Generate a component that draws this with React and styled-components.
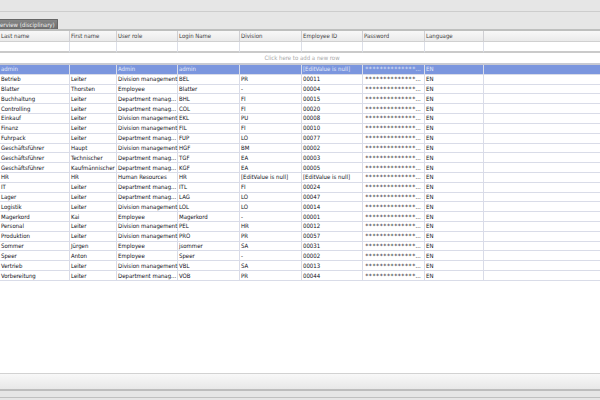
import React, { useState } from 'react';
import styled, { createGlobalStyle } from 'styled-components';

const GlobalStyle = createGlobalStyle`
  * {
    box-sizing: border-box;
  }
  body {
    margin: 0;
    background-color: #e6e6e6;
    font-family: 'DejaVu Sans Condensed', 'DejaVu Sans', sans-serif;
    font-size: 6px;
    line-height: 8px;
    color: #101018;
  }
`;

const Page = styled.div`
  display: flex;
  flex-direction: column;
  min-height: 100vh;
`;

const TopBar = styled.header`
  height: 12px;
  border-bottom: 1px solid #cdcdcd;
`;

const TabBar = styled.nav`
  display: flex;
  padding-top: 7px;
`;

const Tab = styled.button`
  height: 10px;
  padding: 1px 2px 0 0;
  border: 1px solid #666666;
  border-left: none;
  border-bottom: none;
  border-top-right-radius: 1px;
  background: linear-gradient(#868686, #6c6c6c);
  font: inherit;
  white-space: nowrap;
  color: #f2f2f2;
  cursor: pointer;
`;

const Main = styled.main`
  flex: 1;
  border-top: 2px solid #bebfbe;
  background-color: white;
`;

const Table = styled.table`
  width: 100%;
  table-layout: fixed;
  border-collapse: separate;
  border-spacing: 0;
`;

const Col = styled.col`
  width: ${(props) => (props.$width ? `${props.$width}px` : 'auto')};
`;

const HeadCell = styled.th`
  height: 11px;
  padding: 0 1px;
  border-right: 1px solid #cfcfd3;
  border-bottom: 1px solid #d0d0d0;
  background: linear-gradient(#f8f8f8, #eaeaea);
  text-align: left;
  font-weight: normal;
  white-space: nowrap;
  color: #404040;
  &:last-child {
    border-right: none;
  }
`;

const FilterCell = styled.td`
  height: 11px;
  padding: 0;
  border-right: 1px solid #dcdfe8;
  border-bottom: 2px solid #cacaca;
  &:last-child {
    border-right: none;
  }
`;

const FilterInput = styled.input`
  display: block;
  width: 100%;
  height: 8px;
  padding: 0 1px;
  border: none;
  outline: none;
  background: transparent;
  font: inherit;
`;

const NewRowCell = styled.td`
  height: 12px;
  padding: 0;
  border-bottom: 2px solid #c8cad2;
  text-align: center;
`;

const NewRowBtn = styled.button`
  display: block;
  margin: 0 auto;
  padding: 0 0 0 4px;
  border: none;
  background: none;
  font: inherit;
  color: #a8a8a8;
  cursor: pointer;
`;

const Body = styled.tbody`
  height: 216px;
`;

const Row = styled.tr`
  background-color: ${(props) => (props.$selected ? '#7b96de' : 'white')};
  color: ${(props) => (props.$selected ? '#e4eaf9' : 'inherit')};
`;

const Cell = styled.td`
  padding: 0 0 0 1px;
  border-right: 1px solid #d9dce8;
  border-bottom: 1px solid #d9dce8;
  white-space: nowrap;
  &:last-child {
    border-right: none;
  }
`;

const PasswordCell = styled(Cell)`
  padding-left: 2px;
`;

const Stars = styled.span`
  font-family: 'DejaVu Sans Mono', monospace;
  line-height: 6px;
`;

const StatusBar = styled.footer`
  height: 18px;
  border-top: 1px solid #d2d2d2;
  border-bottom: 2px solid #bdbdbd;
  background: linear-gradient(#f8f8f8, #e8e8e8);
`;

const BottomBar = styled.div`
  height: 9px;
  padding-top: 6px;
`;

const BottomLine = styled.hr`
  margin: 0;
  border: none;
  border-top: 1px solid #c0c0c0;
`;

const columns = [
  { key: 'lastName', title: 'Last name', width: 70 },
  { key: 'firstName', title: 'First name', width: 47 },
  { key: 'role', title: 'User role', width: 61 },
  { key: 'login', title: 'Login Name', width: 62 },
  { key: 'division', title: 'Division', width: 62 },
  { key: 'employeeId', title: 'Employee ID', width: 61 },
  { key: 'password', title: 'Password', width: 62 },
  { key: 'language', title: 'Language', width: 59 },
];

const users = [
  ['admin', '', 'Admin', 'admin', '', '[EditValue is null]'],
  ['Betrieb', 'Leiter', 'Division management', 'BEL', 'PR', '00011'],
  ['Blatter', 'Thorsten', 'Employee', 'Blatter', '-', '00004'],
  ['Buchhaltung', 'Leiter', 'Department manag...', 'BHL', 'FI', '00015'],
  ['Controlling', 'Leiter', 'Department manag...', 'COL', 'FI', '00020'],
  ['Einkauf', 'Leiter', 'Division management', 'EKL', 'PU', '00008'],
  ['Finanz', 'Leiter', 'Division management', 'FIL', 'FI', '00010'],
  ['Fuhrpack', 'Leiter', 'Department manag...', 'FUP', 'LO', '00077'],
  ['Geschäftsführer', 'Haupt', 'Division management', 'HGF', 'BM', '00002'],
  ['Geschäftsführer', 'Technischer', 'Department manag...', 'TGF', 'EA', '00003'],
  ['Geschäftsführer', 'Kaufmännischer', 'Department manag...', 'KGF', 'EA', '00005'],
  ['HR', 'HR', 'Human Resources', 'HR', '[EditValue is null]', '[EditValue is null]'],
  ['IT', 'Leiter', 'Department manag...', 'ITL', 'FI', '00024'],
  ['Lager', 'Leiter', 'Department manag...', 'LAG', 'LO', '00047'],
  ['Logistik', 'Leiter', 'Division management', 'LOL', 'LO', '00014'],
  ['Magerkord', 'Kai', 'Employee', 'Magerkord', '-', '00001'],
  ['Personal', 'Leiter', 'Division management', 'PEL', 'HR', '00012'],
  ['Produktion', 'Leiter', 'Division management', 'PRO', 'PR', '00057'],
  ['Sommer', 'Jürgen', 'Employee', 'jsommer', 'SA', '00031'],
  ['Speer', 'Anton', 'Employee', 'Speer', '-', '00002'],
  ['Vertrieb', 'Leiter', 'Division management', 'VBL', 'SA', '00013'],
  ['Vorbereitung', 'Leiter', 'Department manag...', 'VOB', 'PR', '00044'],
];

function App() {
  const [selected, setSelected] = useState(0);

  return (
    <>
      <GlobalStyle />
      <Page>
        <TopBar />
        <TabBar>
          <Tab>erview (disciplinary)</Tab>
        </TabBar>
        <Main>
          <Table>
            <colgroup>
              {columns.map((column) => (
                <Col key={column.key} $width={column.width} />
              ))}
              <Col />
            </colgroup>
            <thead>
              <tr>
                {columns.map((column) => (
                  <HeadCell key={column.key} scope='col'>
                    {column.title}
                  </HeadCell>
                ))}
                <HeadCell as='td' />
              </tr>
              <tr>
                {columns.map((column) => (
                  <FilterCell key={column.key}>
                    <FilterInput type='text' aria-label={`Filter ${column.title}`} />
                  </FilterCell>
                ))}
                <FilterCell />
              </tr>
              <tr>
                <NewRowCell colSpan={columns.length + 1}>
                  <NewRowBtn>Click here to add a new row</NewRowBtn>
                </NewRowCell>
              </tr>
            </thead>
            <Body>
              {users.map((user, index) => (
                <Row key={index} $selected={index === selected} onClick={() => setSelected(index)}>
                  {user.map((value, i) => (
                    <Cell key={columns[i].key}>{value}</Cell>
                  ))}
                  <PasswordCell>
                    <Stars>**************</Stars>...
                  </PasswordCell>
                  <Cell>EN</Cell>
                  <Cell />
                </Row>
              ))}
            </Body>
          </Table>
        </Main>
        <StatusBar />
        <BottomBar>
          <BottomLine />
        </BottomBar>
      </Page>
    </>
  );
}

export default App;
